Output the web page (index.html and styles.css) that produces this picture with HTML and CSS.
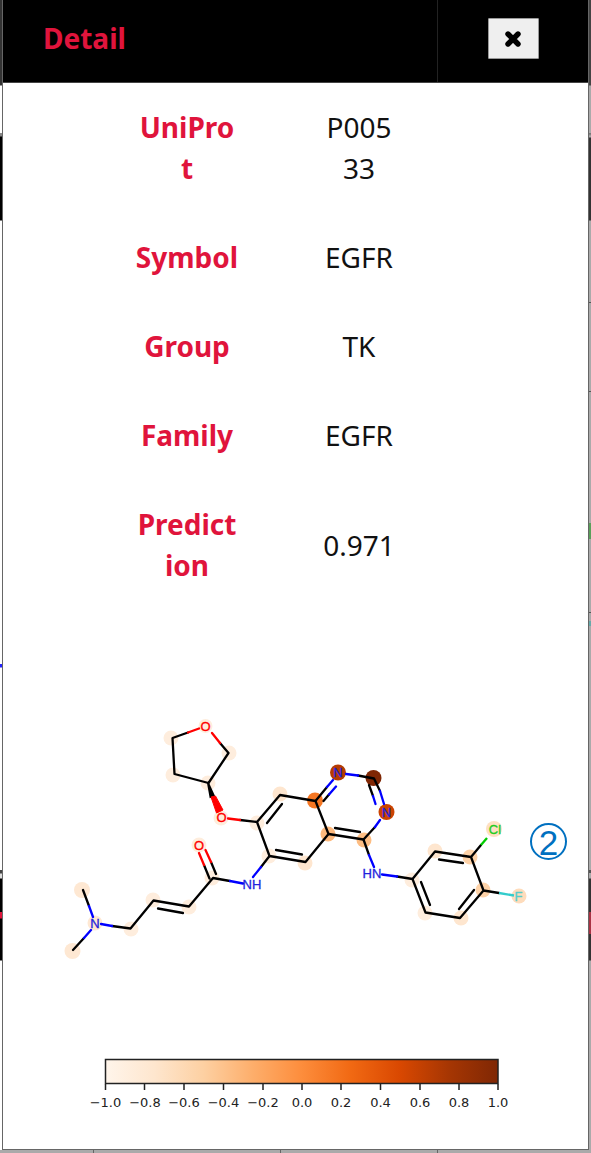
FILE: index.html
```html
<!DOCTYPE html>
<html lang="en">
<head>
<meta charset="utf-8">
<title>Detail</title>
<link rel="stylesheet" href="styles.css">
</head>
<body>
<div class="page">
  <div class="edge edge-left"></div>
  <main class="panel">
    <header class="head">
      <h1 class="title">Detail</h1>
      <div class="head-action">
        <button class="close" type="button" aria-label="Close">
          <svg class="close-icon" viewBox="0 0 18 18"><path d="M4 4 14 14M14 4 4 14" stroke="#000" stroke-width="5.4" stroke-linecap="round"/></svg>
        </button>
      </div>
    </header>
    <table class="facts">
      <tr><th scope="row">UniProt</th><td>P00533</td></tr>
      <tr><th scope="row">Symbol</th><td>EGFR</td></tr>
      <tr><th scope="row">Group</th><td>TK</td></tr>
      <tr><th scope="row">Family</th><td>EGFR</td></tr>
      <tr><th scope="row">Prediction</th><td>0.971</td></tr>
    </table>
    <div class="figure">
      <svg class="plot" viewBox="3 660 585 480" role="img" aria-label="Atom contributions">
        <defs>
          <linearGradient id="oranges">
            <stop offset="0" stop-color="#fff5eb"/><stop offset=".125" stop-color="#fee6ce"/><stop offset=".25" stop-color="#fdd0a2"/>
            <stop offset=".375" stop-color="#fdae6b"/><stop offset=".5" stop-color="#fd8d3c"/><stop offset=".625" stop-color="#f16913"/>
            <stop offset=".75" stop-color="#d94801"/><stop offset=".875" stop-color="#a63603"/><stop offset="1" stop-color="#7f2704"/>
          </linearGradient>
        </defs>
        <!-- atom highlights -->
        <g fill="#fee8d3">
          <circle cx="82" cy="890" r="8"/><circle cx="72.500" cy="951" r="8"/><circle cx="95" cy="923" r="7.500"/>
        </g>
        <g fill="#feeddd">
          <circle cx="205.500" cy="726" r="7"/><circle cx="171" cy="738" r="7.500"/><circle cx="173" cy="775" r="7.500"/><circle cx="208" cy="783" r="7.500"/><circle cx="229" cy="753" r="7.500"/>
          <circle cx="221" cy="818" r="7.500"/><circle cx="199" cy="845" r="7.500"/><circle cx="212" cy="878" r="7.500"/><circle cx="189" cy="907" r="7.500"/><circle cx="153" cy="900" r="7.500"/><circle cx="131" cy="929" r="7.500"/>
          <circle cx="257" cy="823" r="7.500"/><circle cx="269" cy="856" r="7.500"/><circle cx="412" cy="880" r="7.500"/><circle cx="425" cy="913" r="7.500"/>
        </g>
        <g fill="#fee6cf">
          <circle cx="280" cy="794" r="7.500"/><circle cx="305" cy="863" r="7.500"/><circle cx="435" cy="851" r="7.500"/><circle cx="461" cy="918" r="7.500"/>
        </g>
        <g fill="#fdd2a8">
          <circle cx="470" cy="857" r="7.500"/><circle cx="483" cy="890" r="7.500"/><circle cx="519" cy="896" r="7.500" fill="#fedcbc"/><circle cx="494" cy="829" r="8" fill="#fee0c3"/>
        </g>
        <circle cx="328" cy="834" r="7.500" fill="#fdb97d"/><circle cx="364" cy="840" r="7.500" fill="#fdbd83"/>
        <circle cx="315" cy="800.500" r="8" fill="#f67723"/>
        <circle cx="338" cy="772.500" r="8" fill="#b53b02"/><circle cx="373.500" cy="778" r="8" fill="#7f2704"/><circle cx="386.500" cy="812" r="8" fill="#cb4302"/>
        <!-- bonds -->
        <g fill="none" stroke="#000" stroke-width="2.300" stroke-linecap="round" stroke-linejoin="round">
          <path d="M188 732.500 172.500 738 174.500 774 208.500 783 228.500 753 220 743"/>
          <path d="M240 820 257 822 280 795 315.500 801 328.500 834 305.500 862 269.500 856 257 822"/>
          <path d="M269.500 856 261 867M267 823 282 804M276 850 302 854.500M335 828 360 832M328.500 834 363.500 839.500 375 827M315.500 801 327 787M323.500 801 329 794.500M358 775.500 374 778.500 380 791M369 785 373 796"/>
          <path d="M363.500 839.500 369 855M397 876.500 412.500 879 435 851.500 471 857 483.500 890.500 460 918 425.500 912.500 412.500 879M421 882 430 905M439 859.500 463 863M474 890 459 909M471 857 481 845M483.500 890.500 499 893"/>
          <path d="M230 881 213 878 189 906.500 153.500 900.500 130.500 928.500 112 926M158 908.500 183 913M209.500 878.500 204 865M216 874 211 862M83 890 89 906M73 950 84 938"/>
        </g>
        <g fill="none" stroke="#f00" stroke-width="2.300" stroke-linecap="round">
          <path d="M188 732.500 199 728.500M220 743 212 733M228 818.500 240 820M204 865 199 853M211 862 205.500 850"/>
        </g>
        <g fill="none" stroke="#00f" stroke-width="2.300" stroke-linecap="round">
          <path d="M327 787 333 780M329 794.500 336 786.500M346 774 358 775.500M380 791 384 804M373 796 375.500 804M380 820 375 827M369 855 374 867M382 874.500 397 876.500M261 867 253 877M230 881 243 883.500M112 926 101 924M89 906 93 917M84 938 91 930"/>
        </g>
        <path d="M487 838 481 845" stroke="#0c0" stroke-width="2.300"/>
        <path d="M499 893 514 895.500" stroke="#33cccc" stroke-width="2.300"/>
        <path d="M208 783 214 796 210.500 797Z" fill="#000" stroke="#000" stroke-width="2"/>
        <path d="M211 797 215.500 796 223 810 216.500 813Z" fill="#f00" stroke="#f00"/>
        <!-- atom labels -->
        <g class="atoms">
          <g fill="#f00" stroke="#f00"><text x="205.500" y="731">O</text><text x="221.500" y="822">O</text><text x="199" y="850">O</text></g>
          <g fill="#22d" stroke="#22d"><text x="95" y="928">N</text><text x="252" y="889">NH</text><text x="372" y="878">HN</text><text x="338" y="777">N</text><text x="386.500" y="817">N</text></g>
          <text x="495" y="834" fill="#2c2" stroke="#2c2">Cl</text><text x="518.500" y="901" fill="#5cc" stroke="#5cc">F</text>
        </g>
        <!-- colour scale -->
        <rect x="105.500" y="1059.500" width="392.500" height="24" fill="url(#oranges)" stroke="#222" stroke-width="1.500"/>
        <path d="M105.500 1084v6M144.500 1084v6M184 1084v6M223.500 1084v6M263 1084v6M302 1084v6M341 1084v6M380.500 1084v6M420 1084v6M459 1084v6M498 1084v6" stroke="#222" stroke-width="1.500"/>
        <g class="ticks">
          <text x="105.500" y="1107">−1.0</text><text x="145" y="1107">−0.8</text><text x="184" y="1107">−0.6</text><text x="223.500" y="1107">−0.4</text><text x="263" y="1107">−0.2</text><text x="302" y="1107">0.0</text><text x="341" y="1107">0.2</text><text x="380.500" y="1107">0.4</text><text x="420" y="1107">0.6</text><text x="459" y="1107">0.8</text><text x="498" y="1107">1.0</text>
        </g>
      </svg>
      <span class="callout">2</span>
    </div>
  </main>
  <div class="edge edge-right"></div>
  <div class="edge edge-bottom"></div>
</div>
</body>
</html>
```
FILE: styles.css
```css
* {
  box-sizing: border-box;
}

body {
  margin: 0;
  font-family: "Noto Sans", "Open Sans", sans-serif;
  font-size: 28px;
  line-height: 41px;
  color: #111;
  background: #fff;
}

.page {
  display: grid;
  grid-template-columns: 2px 1fr 2px;
  grid-template-rows: 1fr 3px;
  min-height: 100vh;
}

/* slivers of the table behind the dialog */
.edge-left {
  background: linear-gradient(#333 85px, #fff 86px 133px, #888 133px 136px, #000 137px 220px, #fff 221px 664px, #22f 664px 667px, #fff 668px 870px, #444 870px 873px, #ddd 874px 878px, #000 879px 912px, #e0143c 912px 918px, #000 919px 960px, #fff 961px);
}

.edge-right {
  background: linear-gradient(#444 85px, #aaa 86px 133px, #777 133px 134px, #aaa 136px 137px, #333 138px 220px, #aaa 221px 302px, #555 302px 303px, #aaa 303px 391px, #555 391px 392px, #aaa 392px 523px, #5a9f5a 523px 539px, #aaa 539px 612px, #555 612px 613px, #aaa 613px 621px, #6aa 621px 626px, #aaa 626px 870px, #555 870px 873px, #aaa 873px 878px, #333 879px 912px, #a34 912px 934px, #333 934px 960px, #aaa 961px);
}

.edge-bottom {
  grid-column: 1 / -1;
  background:
    linear-gradient(#666, #666) 93px 0 / 1px 3px no-repeat,
    linear-gradient(#666, #666) 280px 0 / 1px 3px no-repeat,
    linear-gradient(#666, #666) 437px 0 / 1px 3px no-repeat,
    #aaa;
}

.panel {
  border: 1px solid #666;
  border-top: 0;
  background: #fff;
}

.head {
  display: flex;
  height: 83px;
  background: #000;
  border-bottom: 1px solid #444;
}

.title {
  flex: 1;
  margin: 0;
  padding: 18px 40px;
  font-size: 28px;
  font-weight: 700;
  color: #e0143c;
}

.head-action {
  display: flex;
  width: 151px;
  padding-top: 18px;
  justify-content: center;
  align-items: flex-start;
  border-left: 1px solid #222;
}

.close {
  display: grid;
  place-items: center;
  width: 51px;
  height: 41px;
  padding: 0;
  border: 1px solid #999;
  border-radius: 1px;
  background: #efefef;
}

.close-icon {
  width: 18px;
  height: 18px;
}

.facts {
  width: 344px;
  max-width: 100%;
  margin-left: 98px;
  border-collapse: collapse;
  table-layout: fixed;
  text-align: center;
  word-break: break-all;
}

.facts th,
.facts td {
  padding: 24px 34px;
}

.facts th {
  color: #e0143c;
}

.facts td {
  padding-right: 48px;
  padding-left: 48px;
}

.figure {
  position: relative;
  padding-top: 50px;
}

.plot {
  display: block;
  width: 100%;
}

.atoms {
  font: 13px "Liberation Sans", Arial, sans-serif;
  text-anchor: middle;
  stroke-width: 0.3px;
}

.ticks {
  font: 13px "DejaVu Sans", sans-serif;
  text-anchor: middle;
  fill: #222;
}

/* circled number marking the figure */
.callout {
  position: absolute;
  top: 213px;
  right: 21px;
  width: 37px;
  height: 37px;
  border: 2px solid #0070c0;
  border-radius: 50%;
  font: 35px/35px "Liberation Sans", Arial, sans-serif;
  text-align: center;
  color: #0070c0;
}
```
